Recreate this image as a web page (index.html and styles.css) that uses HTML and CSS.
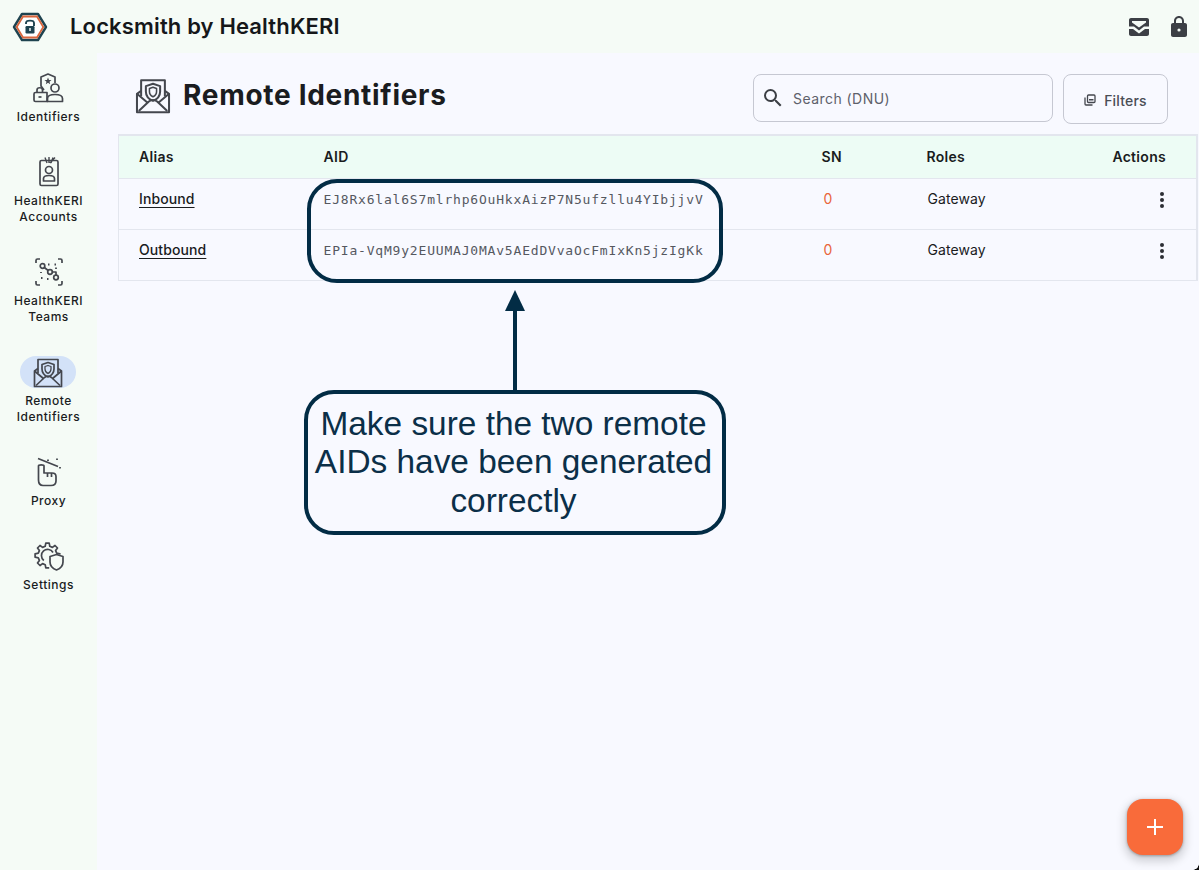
FILE: index.html
```html
<!DOCTYPE html>
<html lang="en">

<head>
    <meta charset="UTF-8">
    <title>Locksmith by HealthKERI</title>
    <link rel="stylesheet" href="styles.css">
</head>

<body>

    <header class="topbar">
        <div class="brand">
            <svg class="logo" viewBox="0 0 36 32" width="36" height="32">
                <path d="M10 3H26L34 16L26 29H10L2 16Z" fill="#fff" stroke="#1f4350" stroke-width="2.4" stroke-linejoin="round"/>
                <path d="M11 5.500H25L31.300 16L25 26.500H11L4.700 16Z" fill="#fff" stroke="#d9653c" stroke-width="1.800"/>
                <path d="M14 13V12C14 8.800 22 8.800 22 12V15" fill="none" stroke="#1f4350" stroke-width="1.900"/>
                <rect x="13.500" y="15" width="9" height="7.500" rx="1.200" fill="#1f4350"/>
                <rect x="17.300" y="17" width="1.400" height="3" fill="#fff"/>
            </svg>
            <span class="brand-name">Locksmith by HealthKERI</span>
        </div>
        <div class="top-actions">
            <svg viewBox="0 0 20 18" width="20" height="18" fill="#3c3f45">
                <path d="M2 0H18C19.100 0 20 .9 20 2V8.500H15L10 12.500L5 8.500H0V2C0 .9 .9 0 2 0ZM3 3V4.500L10 9.500L17 4.500V3Z" fill-rule="evenodd"/>
                <path d="M0 11H4L10 15.500L16 11H20V16C20 17.100 19.100 18 18 18H2C.9 18 0 17.100 0 16Z"/>
            </svg>
            <svg viewBox="0 0 16 21" width="16" height="21" fill="#3c3f45">
                <path d="M14 7H13V5C13 2.240 10.800 0 8 0S3 2.240 3 5V7H2C.9 7 0 7.900 0 9V19C0 20.100 .9 21 2 21H14C15.100 21 16 20.100 16 19V9C16 7.900 15.100 7 14 7ZM8 15.600A1.600 1.600 0 1 1 8 12.400A1.600 1.600 0 0 1 8 15.600ZM11 7H5V5C5 3.300 6.300 2 8 2S11 3.300 11 5Z" fill-rule="evenodd"/>
            </svg>
        </div>
    </header>

    <div class="layout">
        <nav class="sidebar">
            <a class="nav-item">
                <span class="nav-icon">
                    <svg viewBox="0 0 32 32" width="32" height="32" class="line-icon">
                        <path d="M12 18L9 14V5L16 2L23 5V11"/>
                        <path d="M16 5.500L17 8H19.500L17.500 9.700L18.200 12.200L16 10.800L13.800 12.200L14.500 9.700L12.500 8H15Z" fill="#44474e" stroke="none"/>
                        <circle cx="23" cy="16" r="4"/>
                        <path d="M15.500 29.500V26.500C15.500 24 18.500 22.500 23 22.500S30.500 24 30.500 26.500V29.500Z"/>
                        <path d="M3.500 20.500H15V29.500H3.500C2.500 29.500 2 29 2 28V22C2 21 2.500 20.500 3.500 20.500Z"/>
                        <path d="M5 20.500V18C5 15 10.500 15 10.500 18V20.500"/>
                        <path d="M6.500 25H9.500"/>
                    </svg>
                </span>
                <span class="nav-label">Identifiers</span>
            </a>
            <a class="nav-item">
                <span class="nav-icon">
                    <svg viewBox="0 0 32 32" width="32" height="32" class="line-icon">
                        <rect x="7" y="4.500" width="18" height="25" rx="1.500"/>
                        <path d="M12 1.500L14 7M16 1L16 7M20 1.500L18 7M22 1.500L17 7" stroke-width="1.400"/>
                        <circle cx="16" cy="14" r="3.500"/>
                        <path d="M10.500 25V22.500C10.500 20.500 13 19.500 16 19.500S21.500 20.500 21.500 22.500V25Z"/>
                    </svg>
                </span>
                <span class="nav-label">HealthKERI<br>Accounts</span>
            </a>
            <a class="nav-item">
                <span class="nav-icon">
                    <svg viewBox="0 0 32 32" width="32" height="32" class="line-icon">
                        <path d="M3 7V4.500C3 3.500 3.500 3 4.500 3H7M25 3H27.500C28.500 3 29 3.500 29 4.500V7M29 25V27.500C29 28.500 28.500 29 27.500 29H25M7 29H4.500C3.500 29 3 28.500 3 27.500V25"/>
                        <circle cx="9.500" cy="10" r="2.300"/>
                        <circle cx="17" cy="16" r="2.300"/>
                        <circle cx="23" cy="21.500" r="2.300"/>
                        <path d="M11.300 11.500L15.200 14.500M19.300 16H23V19.200"/>
                        <path d="M15 8.500H16.500M21.500 8.500H23M8 16V17M8 22H9.500M14 23H15.500M23 11.500V13" stroke-width="1.800"/>
                    </svg>
                </span>
                <span class="nav-label">HealthKERI<br>Teams</span>
            </a>
            <a class="nav-item active">
                <span class="nav-icon">
                    <svg viewBox="0 0 32 32" width="32" height="32" class="line-icon">
                        <use href="#mail-shield"/>
                    </svg>
                </span>
                <span class="nav-label">Remote<br>Identifiers</span>
            </a>
            <a class="nav-item">
                <span class="nav-icon">
                    <svg viewBox="0 0 32 32" width="32" height="32" class="line-icon">
                        <path d="M5 2.500L25 10.500" stroke-width="1.600"/>
                        <path d="M15 3.500V5M24 2.500V4M27 11V12.500" stroke-width="1.800"/>
                        <path d="M5.500 10C5.500 8.500 11 8.500 11 10V17H19C21.500 17 23 18.500 23 20.500V25C23 28 21 29.500 18 29.500H10C7 29.500 5.500 27 5.500 24Z"/>
                        <path d="M14.500 17V21M18.500 17V21"/>
                    </svg>
                </span>
                <span class="nav-label">Proxy</span>
            </a>
            <a class="nav-item">
                <span class="nav-icon">
                    <svg viewBox="0 0 32 32" width="32" height="32" class="line-icon">
                        <path d="M16.200 27.900H12.800L12.200 24.700L9.600 23.600L7 25.500L4.500 23L6.400 20.400L5.300 17.800L2.100 17.200V13.800L5.300 13.200L6.400 10.600L4.500 8L7 5.500L9.600 7.400L12.200 6.300L12.800 3.100H16.200L16.800 6.300L19.400 7.400L22 5.500L24.500 8L22.600 10.600L23.700 13.200L26.900 13.800V14.500"/>
                        <path d="M10.800 20.500A6.200 6.200 0 1 1 20 12.500"/>
                        <path d="M23.500 14.500L30 16.500V22C30 26 27.500 28.500 23.500 30C19.500 28.500 17 26 17 22V16.500Z"/>
                    </svg>
                </span>
                <span class="nav-label">Settings</span>
            </a>
        </nav>

        <main class="content">
            <div class="page-head">
                <div class="page-title">
                    <svg viewBox="0 0 32 32" width="38" height="38" class="line-icon title-icon">
                        <use href="#mail-shield"/>
                    </svg>
                    <h1>Remote Identifiers</h1>
                </div>
                <div class="search">
                    <svg viewBox="0 0 24 24" width="24" height="24" fill="#3c3f45">
                        <path d="M15.500 14h-.79l-.28-.27A6.470 6.470 0 0 0 16 9.500 6.500 6.500 0 1 0 9.500 16c1.610 0 3.090-.59 4.230-1.570l.27.28v.79l5 4.990L20.490 19l-4.990-5zm-6 0C7.010 14 5 11.990 5 9.500S7.010 5 9.500 5 14 7.010 14 9.500 11.990 14 9.500 14z"/>
                    </svg>
                    <span>Search (DNU)</span>
                </div>
                <button class="filters">
                    <svg viewBox="0 0 12 12" width="12" height="12" fill="none" stroke="#44474e" stroke-width="1.300">
                        <rect x="3.500" y="1" width="7.500" height="7.500" rx="1"/>
                        <path d="M1 3.500V10C1 10.600 1.400 11 2 11H8.500"/>
                        <path d="M5 6.500H9.500V5H5Z" fill="#44474e" stroke="none"/>
                    </svg>
                    Filters
                </button>
            </div>

            <table class="aid-table">
                <thead>
                    <tr>
                        <th class="col-alias">Alias</th>
                        <th class="col-aid">AID</th>
                        <th class="col-sn">SN</th>
                        <th class="col-roles">Roles</th>
                        <th class="col-actions">Actions</th>
                    </tr>
                </thead>
                <tbody>
                    <tr>
                        <td><a class="alias">Inbound</a></td>
                        <td class="aid">EJ8Rx6lal6S7mlrhp6OuHkxAizP7N5ufzllu4YIbjjvV</td>
                        <td class="sn">0</td>
                        <td class="role">Gateway</td>
                        <td class="more"><span class="dots"><i></i><i></i><i></i></span></td>
                    </tr>
                    <tr>
                        <td><a class="alias">Outbound</a></td>
                        <td class="aid">EPIa-VqM9y2EUUMAJ0MAv5AEdDVvaOcFmIxKn5jzIgKk</td>
                        <td class="sn">0</td>
                        <td class="role">Gateway</td>
                        <td class="more"><span class="dots"><i></i><i></i><i></i></span></td>
                    </tr>
                </tbody>
            </table>
        </main>
    </div>

    <button class="fab" aria-label="Add">
        <svg viewBox="0 0 16 16" width="16" height="16" fill="#fff"><path d="M7 0H9V7H16V9H9V16H7V9H0V7H7Z"/></svg>
    </button>

    <!-- annotation drawn on top of the screenshot -->
    <div class="aid-ring"></div>
    <svg class="arrow" viewBox="0 0 20 102" width="20" height="102">
        <path d="M10 0L20 21H0Z" fill="#022c45"/>
        <rect x="8" y="20" width="4" height="82" fill="#022c45"/>
    </svg>
    <div class="callout">Make sure the two remote AIDs have been generated correctly</div>
    <div class="corner"></div>

    <svg class="defs" width="0" height="0">
        <symbol id="mail-shield" viewBox="0 0 32 32">
            <path d="M6 12.500L2.500 15V30.500H29.500V15L26 12.500"/>
            <path d="M6 17V3.500H26V17"/>
            <path d="M16 6.500L22 8.500V13C22 17 19.500 19.500 16 21C12.500 19.500 10 17 10 13V8.500Z"/>
            <path d="M16 9.500L19 10.500V13C19 15 18 16.500 16 17.500C14 16.500 13 15 13 13V10.500Z" stroke-width="1.300"/>
            <path d="M2.500 15L12 23M29.500 15L20 23M4 29.500L12.500 21.500C14.500 20 17.500 20 19.500 21.500L28 29.500"/>
        </symbol>
    </svg>

</body>

</html>
```

FILE: styles.css
```css
* {
    box-sizing: border-box;
}

body {
    margin: 0;
    height: 870px;
    overflow: hidden;
    font-family: 'Inter', sans-serif;
    color: #1a1c1e;
    background-color: #f8f9ff;
}

.topbar {
    height: 53px;
    display: flex;
    justify-content: space-between;
    align-items: center;
    padding: 0 12px;
    background-color: #f5fbf6;
}

.brand {
    display: flex;
    align-items: center;
    gap: 22px;
}

.logo {
    display: block;
}

.brand-name {
    margin-bottom: 2px;
    font-size: 22px;
    font-weight: 600;
    letter-spacing: 0.15px;
    color: #15171a;
}

.top-actions {
    display: flex;
    align-items: center;
    gap: 22px;
}

.layout {
    display: flex;
    height: 817px;
}

.sidebar {
    width: 97px;
    flex-shrink: 0;
    padding-top: 19px;
    display: flex;
    flex-direction: column;
    align-items: center;
    gap: 31px;
    background-color: #f5fbf6;
}

.nav-item {
    display: flex;
    flex-direction: column;
    align-items: center;
    gap: 5px;
}

.nav-icon {
    width: 56px;
    height: 32px;
    border-radius: 16px;
    display: flex;
    justify-content: center;
    align-items: center;
}

.nav-item.active .nav-icon {
    background-color: #d3e2f8;
}

.nav-label {
    font-size: 12px;
    line-height: 16px;
    font-weight: 500;
    letter-spacing: 0.5px;
    text-align: center;
    color: #1a1c1e;
    white-space: nowrap;
}

.line-icon {
    fill: none;
    stroke: #44474e;
    stroke-width: 1.700;
    stroke-linejoin: round;
    overflow: visible;
}

.defs {
    position: absolute;
}

.content {
    flex: 1;
    padding: 21px 1px 0 21px;
}

.page-head {
    height: 60px;
    display: flex;
    align-items: flex-start;
    padding-left: 16px;
}

.page-title {
    display: flex;
    align-items: center;
    gap: 11px;
    width: 619px;
    height: 42px;
}

.title-icon {
    width: 38px;
    height: 38px;
}

h1 {
    margin: 0;
    font-size: 28px;
    font-weight: 700;
    letter-spacing: 0.7px;
    color: #1a1c20;
}

.search {
    width: 300px;
    height: 48px;
    display: flex;
    align-items: center;
    gap: 8px;
    padding-left: 7px;
    border: 1px solid #c6c8d2;
    border-radius: 8px;
    font-size: 14px;
    letter-spacing: 0.45px;
    color: #5e616b;
}

.filters {
    width: 105px;
    height: 50px;
    margin-left: 10px;
    display: flex;
    align-items: center;
    justify-content: center;
    gap: 8px;
    padding: 2px 0 0;
    border: 1px solid #c6c8d2;
    border-radius: 8px;
    background: none;
    font-family: inherit;
    font-size: 14px;
    font-weight: 500;
    letter-spacing: 0.2px;
    color: #4a4d55;
}

.aid-table {
    width: 1080px;
    table-layout: fixed;
    border-collapse: collapse;
    border: 1px solid #e3e6ee;
    border-top-width: 2px;
    border-right-width: 2px;
    font-size: 14px;
}

th {
    height: 43px;
    padding: 0 0 0 20px;
    text-align: left;
    font-weight: 600;
    letter-spacing: 0.3px;
    color: #1a1c1e;
    background-color: #edfcf5;
    border-bottom: 1px solid #e3e6ee;
}

td {
    height: 51px;
    padding: 0 0 10px 20px;
    letter-spacing: 0.1px;
    border-bottom: 1px solid #e3e6ee;
}

.col-alias {
    width: 185px;
}

.col-aid {
    width: 498px;
}

.col-sn {
    width: 105px;
}

.col-roles {
    width: 140px;
}

th.col-actions {
    padding: 0 30px 0 0;
    text-align: right;
}

.alias {
    text-decoration: underline;
    text-underline-offset: 3px;
    font-weight: 500;
    color: #1a1c1e;
}

td.aid {
    padding: 0 0 9px 20px;
    font-family: 'DejaVu Sans Mono', monospace;
    font-size: 13px;
    letter-spacing: 0.81px;
    color: #55585f;
}

td.sn {
    padding-left: 22px;
    color: #e8653a;
}

td.role {
    padding-left: 21px;
}

td.more {
    padding: 0 32px 10px 0;
    text-align: right;
}

.dots {
    display: inline-flex;
    flex-direction: column;
    gap: 2px;
    vertical-align: middle;
}

.dots i {
    width: 4px;
    height: 4px;
    border-radius: 50%;
    background-color: #2c2f34;
}

.fab {
    position: absolute;
    left: 1127px;
    top: 799px;
    width: 56px;
    height: 56px;
    display: flex;
    justify-content: center;
    align-items: center;
    border: none;
    border-radius: 16px;
    background-color: #f96b3a;
    box-shadow: 0 4px 8px 3px rgba(0, 0, 0, 0.15), 0 1px 3px rgba(0, 0, 0, 0.3);
}

.aid-ring {
    position: absolute;
    left: 307px;
    top: 179px;
    width: 416px;
    height: 104px;
    border: 4px solid #022c45;
    border-radius: 30px;
}

.arrow {
    position: absolute;
    left: 505px;
    top: 290px;
}

.callout {
    position: absolute;
    left: 304px;
    top: 390px;
    width: 422px;
    height: 145px;
    display: flex;
    align-items: center;
    justify-content: center;
    padding: 0 6px 0 3px;
    border: 4px solid #022c45;
    border-radius: 30px;
    text-align: center;
    font-family: 'Liberation Sans', Arial, sans-serif;
    font-size: 33.4px;
    line-height: 38.5px;
    color: #0b2f48;
}

.corner {
    position: absolute;
    right: 0;
    bottom: 0;
    width: 6px;
    height: 6px;
    background: radial-gradient(circle at 0 0, transparent 5.500px, #111 6px);
}
```
